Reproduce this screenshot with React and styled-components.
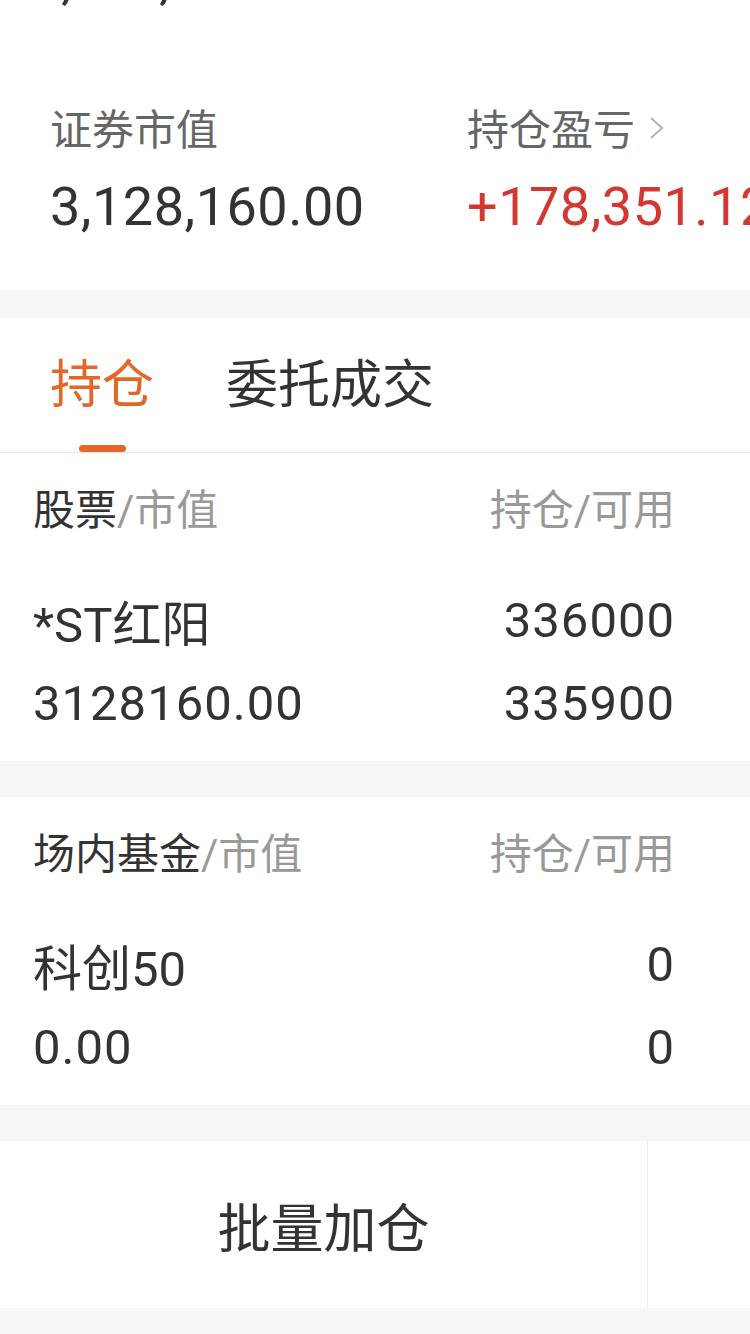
import styled, { createGlobalStyle } from "styled-components"

const GlobalStyle = createGlobalStyle`
    html, body {
        margin: 0;
        padding: 0;
        background: #f5f6f8;
    }
    body {
        font-family: "Roboto", "Noto Sans CJK SC", sans-serif;
        color: #333;
    }
`;

const Page = styled.div`
    width: 750px;
    height: 1334px;
    overflow: hidden;
    background: #f5f6f8;
`;

const Summary = styled.section`
    background: #fff;
    padding-bottom: 48px;
    margin-bottom: 28px;
`;

const ClippedTotal = styled.div`
    height: 10px;
    overflow: hidden;
    padding-left: 32px;
`;

const ClippedValue = styled.div`
    font-size: 52px;
    line-height: 52px;
    margin-top: -44px;
    white-space: nowrap;
    color: #333;
`;

const SummaryGrid = styled.div`
    display: grid;
    grid-template-columns: 417px 1fr;
    padding: 86px 0 0 50px;
`;

const SummaryCell = styled.div`
    display: flex;
    flex-direction: column;
    gap: 16px;
    overflow: hidden;
    white-space: nowrap;
`;

const SummaryLabel = styled.div`
    display: flex;
    align-items: center;
    height: 60px;
    font-size: 42px;
    color: #666;
`;

const Chevron = styled.svg`
    margin-left: 13px;
    margin-top: 4px;
    flex-shrink: 0;
`;

const SummaryValue = styled.div`
    height: 70px;
    line-height: 70px;
    font-size: 54px;
    letter-spacing: 0.5px;
    color: ${(p) => (p.$up ? "#d3372f" : "#333")};
`;

const Card = styled.section`
    background: #fff;
    margin-bottom: 36px;
`;

const TabBar = styled.div`
    display: flex;
    gap: 72px;
    padding: 38px 0 0 50px;
    border-bottom: 1px solid #e6e6e6;
`;

const Tab = styled.div`
    display: flex;
    flex-direction: column;
    align-items: center;
    gap: 29px;
`;

const TabLabel = styled.div`
    height: 60px;
    line-height: 60px;
    font-size: 52px;
    color: ${(p) => (p.$active ? "#e4672a" : "#333")};
    white-space: nowrap;
`;

const TabLine = styled.div`
    width: 47px;
    height: 7px;
    border-radius: 4px;
    background: ${(p) => (p.$active ? "#e4672a" : "transparent")};
`;

const List = styled.div`
    padding: 28px 75px 28px 33px;
`;

const HeadRow = styled.div`
    display: flex;
    justify-content: space-between;
    align-items: center;
    height: 50px;
    font-size: 42px;
    margin-bottom: 59px;
`;

const Muted = styled.span`
    color: #999;
`;

const Row = styled.div`
    display: flex;
    justify-content: space-between;
    align-items: center;
    height: 60px;
    font-size: 49px;
    color: #333;
    & + & {
        margin-top: 23px;
    }
`;

const Cell = styled.span`
    letter-spacing: ${(p) => (p.$num ? "1px" : "0")};
`;

const ActionBar = styled.div`
    display: flex;
    height: 167px;
    background: #fff;
`;

const ActionButton = styled.div`
    flex: 0 0 647px;
    display: flex;
    align-items: center;
    justify-content: center;
    font-size: 53px;
    color: #333;
    border-right: 1px solid #f0f0f0;
`;

const holdings = [
    {
        kind: "股票",
        rows: [
            ["*ST红阳", "336000"],
            ["3128160.00", "335900"],
        ],
    },
    {
        kind: "场内基金",
        rows: [
            ["科创50", "0"],
            ["0.00", "0"],
        ],
    },
];

const isNum = (s) => /^[\d.]+$/.test(s);

function Holding({ kind, rows }) {
    return (
        <List>
            <HeadRow>
                <span>
                    {kind}
                    <Muted>/市值</Muted>
                </span>
                <Muted>持仓/可用</Muted>
            </HeadRow>
            {rows.map(([left, right]) => (
                <Row key={left}>
                    <Cell $num={isNum(left)}>{left}</Cell>
                    <Cell $num={isNum(right)}>{right}</Cell>
                </Row>
            ))}
        </List>
    );
}

export default function App() {
    return (
        <Page>
            <GlobalStyle />
            <Summary>
                <ClippedTotal>
                    <ClippedValue>1,306,511.12</ClippedValue>
                </ClippedTotal>
                <SummaryGrid>
                    <SummaryCell>
                        <SummaryLabel>证券市值</SummaryLabel>
                        <SummaryValue>3,128,160.00</SummaryValue>
                    </SummaryCell>
                    <SummaryCell>
                        <SummaryLabel>
                            持仓盈亏
                            <Chevron width="17" height="24" viewBox="0 0 17 24">
                                <path d="M3 2 L14 12 L3 22" fill="none" stroke="#b3b3b3" strokeWidth="2" />
                            </Chevron>
                        </SummaryLabel>
                        <SummaryValue $up>+178,351.12</SummaryValue>
                    </SummaryCell>
                </SummaryGrid>
            </Summary>

            <Card>
                <TabBar>
                    <Tab>
                        <TabLabel $active>持仓</TabLabel>
                        <TabLine $active />
                    </Tab>
                    <Tab>
                        <TabLabel>委托成交</TabLabel>
                        <TabLine />
                    </Tab>
                </TabBar>
                <Holding {...holdings[0]} />
            </Card>

            <Card>
                <Holding {...holdings[1]} />
            </Card>

            <ActionBar>
                <ActionButton>批量加仓</ActionButton>
            </ActionBar>
        </Page>
    );
}
